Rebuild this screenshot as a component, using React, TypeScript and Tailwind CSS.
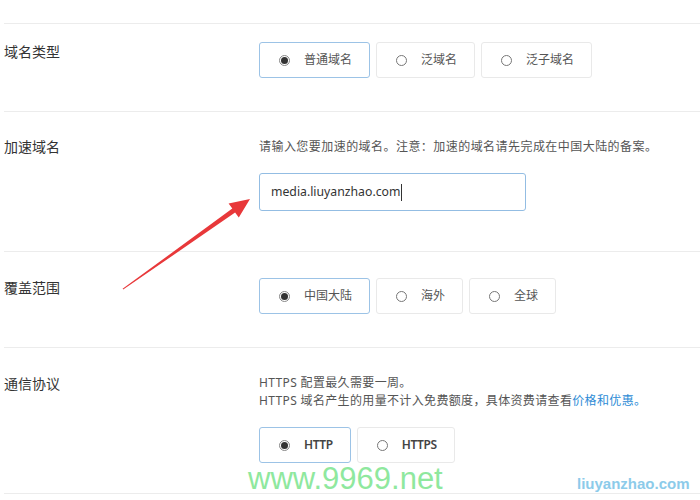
import React from "react";

const FONT = { fontFamily: "'Noto Sans', 'Noto Sans CJK SC', sans-serif" };

function Radio({ checked }: { checked: boolean }) {
  if (checked) {
    return (
      <span className="flex h-[11px] w-[11px] items-center justify-center rounded-full border border-[#888] bg-white">
        <span className="h-[7px] w-[7px] rounded-full bg-[#333]" />
      </span>
    );
  }
  return <span className="h-[11px] w-[11px] rounded-full border border-[#777] bg-white" />;
}

function Opt({ label, checked, latin }: { label: string; checked?: boolean; latin?: boolean }) {
  return (
    <div
      className={
        "flex h-[36px] items-center gap-[14px] rounded-[3px] border pl-[19px] pr-[17px] " +
        (checked ? "border-[#9cc3e6]" : "border-[#e9e9e9]")
      }
    >
      <Radio checked={!!checked} />
      <span
        className={
          "text-[12px] leading-[16px] " +
          (latin ? "font-semibold tracking-[-0.4px] text-[#444]" : "text-[#555]")
        }
      >
        {label}
      </span>
    </div>
  );
}

function Row({
  label,
  pt,
  pb,
  children,
}: {
  label: string;
  pt: string;
  pb: string;
  children: React.ReactNode;
}) {
  return (
    <div className={"flex border-t border-[#ececec] " + pt + " " + pb}>
      <div className="w-[255px] shrink-0 text-[14px] leading-[20px] text-[#333]">{label}</div>
      <div className="flex-1">{children}</div>
    </div>
  );
}

export default function App() {
  return (
    <div className="relative h-[500px] w-[700px] overflow-hidden bg-white" style={FONT}>
      <div className="pl-[4px] pt-[23px]">
        <Row label="域名类型" pt="pt-[18px]" pb="pb-[33px]">
          <div className="flex gap-[6px]">
            <Opt label="普通域名" checked />
            <Opt label="泛域名" />
            <Opt label="泛子域名" />
          </div>
        </Row>

        <div className="flex border-t border-[#ececec] pt-[26px] pb-[40px]">
          <div className="w-[255px] shrink-0 text-[14px] leading-[18px] text-[#333]">加速域名</div>
          <div className="flex-1">
            <div className="text-[12px] leading-[18px] tracking-[0.45px] text-[#555]">
              请输入您要加速的域名。注意：加速的域名请先完成在中国大陆的备案。
            </div>
            <div className="mt-[17px] flex h-[38px] w-[267px] items-center rounded-[3px] border border-[#93bde3] pl-[11px]">
              <span className="text-[12.25px] text-[#333]" style={{ fontFamily: "'Noto Sans', sans-serif" }}>
                media.liuyanzhao.com
              </span>
              <span className="ml-px inline-block h-[17px] w-px bg-[#333]" />
            </div>
          </div>
        </div>

        <Row label="覆盖范围" pt="pt-[26px]" pb="pb-[33px]">
          <div className="flex gap-[6px]">
            <Opt label="中国大陆" checked />
            <Opt label="海外" />
            <Opt label="全球" />
          </div>
        </Row>

        <div className="flex border-y border-[#ececec] pt-[26px] pb-[30px]">
          <div className="w-[255px] shrink-0 text-[14px] leading-[20px] text-[#333]">通信协议</div>
          <div className="flex-1">
            <div className="text-[12px] leading-[18px] tracking-[0.35px] text-[#555]">
              <div>HTTPS 配置最久需要一周。</div>
              <div>
                HTTPS 域名产生的用量不计入免费额度，具体资费请查看
                <span className="text-[#2d8cd6]">价格和优惠。</span>
              </div>
            </div>
            <div className="mt-[17px] flex gap-[6px]">
              <Opt label="HTTP" checked latin />
              <Opt label="HTTPS" latin />
            </div>
          </div>
        </div>
      </div>

      <svg className="pointer-events-none absolute left-0 top-0" width="700" height="500">
        <polygon
          points="122.6,288.8 232.3,208.6 228.6,203.6 250,199 238.8,217.6 235.1,212.6 123.2,289.6"
          fill="#e8383a"
        />
      </svg>

      <div
        className="pointer-events-none absolute left-[248px] top-[463px] text-[31px] leading-[31px] text-[#8fe89e]"
        style={{ fontFamily: "'Liberation Sans', Arial, sans-serif" }}
      >
        www.9969.net
      </div>
      <div
        className="pointer-events-none absolute left-[577px] top-[476px] text-[15px] font-bold leading-[15px] text-[#8ccbea]"
        style={{ fontFamily: "'Liberation Sans', Arial, sans-serif" }}
      >
        liuyanzhao.com
      </div>
    </div>
  );
}
